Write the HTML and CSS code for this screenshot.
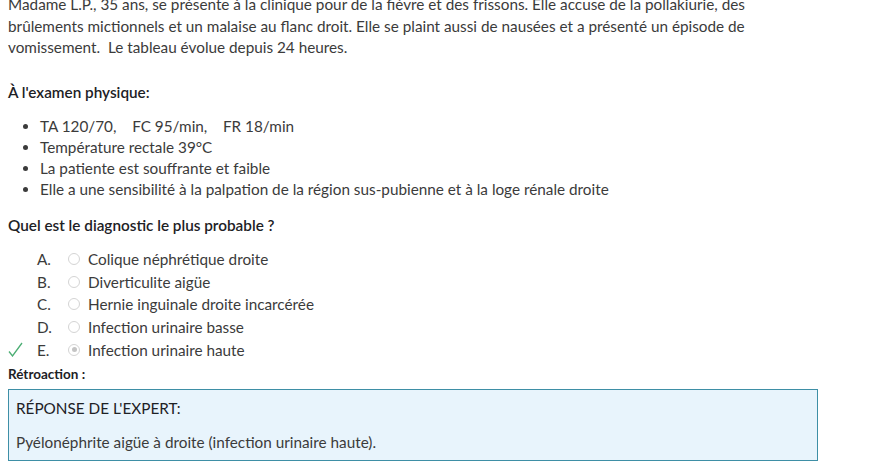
FILE: index.html
```html
<!DOCTYPE html>
<html lang="fr">
<head>
<meta charset="utf-8">
<link rel="stylesheet" href="styles.css">
</head>
<body>
<div class="page">
  <p class="intro">Madame L.P., 35 ans, se présente à la clinique pour de la fièvre et des frissons. Elle accuse de la pollakiurie, des brûlements mictionnels et un malaise au flanc droit. Elle se plaint aussi de nausées et a présenté un épisode de vomissement.&nbsp; Le tableau évolue depuis 24 heures.</p>
  <p class="heading">À l'examen physique:</p>
  <ul class="findings">
    <li>TA 120/70, &nbsp;&nbsp; FC 95/min, &nbsp;&nbsp; FR 18/min</li>
    <li>Température rectale 39°C</li>
    <li>La patiente est souffrante et faible</li>
    <li>Elle a une sensibilité à la palpation de la région sus-pubienne et à la loge rénale droite</li>
  </ul>
  <p class="question">Quel est le diagnostic le plus probable ?</p>
  <div class="answers">
    <div class="answer"><span class="mark"></span><span class="letter">A.</span><span class="radio"></span><span class="label">Colique néphrétique droite</span></div>
    <div class="answer"><span class="mark"></span><span class="letter">B.</span><span class="radio"></span><span class="label">Diverticulite aigüe</span></div>
    <div class="answer"><span class="mark"></span><span class="letter">C.</span><span class="radio"></span><span class="label">Hernie inguinale droite incarcérée</span></div>
    <div class="answer"><span class="mark"></span><span class="letter">D.</span><span class="radio"></span><span class="label">Infection urinaire basse</span></div>
    <div class="answer"><span class="mark"><svg width="15" height="15" viewBox="0 0 15 15"><path d="M1 9.5 L4.5 14 L14 1" fill="none" stroke="#4cae74" stroke-width="1.3"/></svg></span><span class="letter">E.</span><span class="radio checked"></span><span class="label">Infection urinaire haute</span></div>
  </div>
  <p class="feedback-title">Rétroaction :</p>
  <div class="feedback">
    <p class="expert">RÉPONSE DE L'EXPERT:</p>
    <p class="expert-text">Pyélonéphrite aigüe à droite (infection urinaire haute).</p>
  </div>
</div>
</body>
</html>
```
FILE: styles.css
```css
html, body { margin: 0; padding: 0; background: #fff; }
body {
  font-family: "Lato", "Open Sans", sans-serif;
  font-size: 15.3px;
  color: #3b3b3b;
}
.page { padding: 0 0 0 8px; width: 810px; margin-top: -6px; }
p { margin: 0; }
.intro { line-height: 21.5px; }
.heading { margin-top: 22px; color: #1d2125; font-weight: 600; line-height: 22px; }
.findings { margin: 13px 0 0; padding-left: 32px; line-height: 21px; }
.findings li { padding-left: 0; }
.question { margin-top: 14px; color: #1d2125; font-weight: 600; line-height: 22px; }
.answers { margin-top: 12px; }
.answer { display: flex; align-items: center; height: 22.75px; }
.mark { width: 29px; display: flex; align-items: center; }
.letter { width: 31px; }
.radio {
  width: 12px; height: 12px; border-radius: 50%;
  border: 1px solid #d4d4d4; box-sizing: border-box; background: #fff;
  margin-right: 8px; position: relative;
}
.radio.checked::after {
  content: ""; position: absolute; left: 2.5px; top: 2.5px;
  width: 5px; height: 5px; border-radius: 50%; background: #c4c4c4;
}
.feedback-title { margin-top: 3px; font-size: 13.5px; font-weight: 700; color: #1d2125; line-height: 20px; }
.feedback {
  margin-top: 5px; background: #e8f4fc; border: 1px solid #3e8fa6;
  padding: 8px 8px 8px 7px;
}
.expert { color: #1d2125; line-height: 20px; }
.expert-text { margin-top: 14px; line-height: 20px; }
```
